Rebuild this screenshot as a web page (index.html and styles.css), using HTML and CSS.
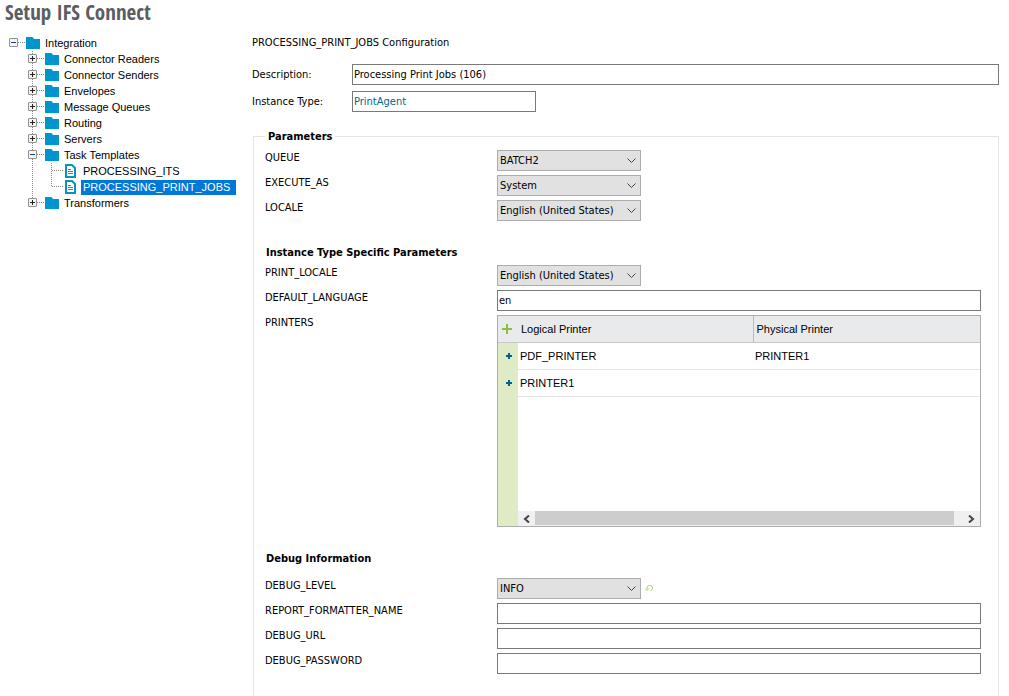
FILE: index.html
```html
<!DOCTYPE html>
<html lang="en">
<head>
<meta charset="utf-8">
<title>Setup IFS Connect</title>
<link rel="stylesheet" href="styles.css">
</head>
<body>
<svg class="symbols" aria-hidden="true">
  <symbol id="folder" viewBox="0 0 14 12"><path fill="#0095cc" d="M0 0H6.500L8 2H14V12H0Z"/></symbol>
  <symbol id="doc" viewBox="0 0 14 14"><path fill="#fff" stroke="#0a93bf" stroke-width="2" d="M2 1H8L11 4V13H2Z"/><path stroke="#0a93bf" d="M4 5.500H7M4 7.500H9M4 9.500H9"/></symbol>
  <symbol id="row-plus" viewBox="0 0 6 6"><path fill="#006288" d="M2 0H4V2H6V4H4V6H2V4H0V2H2Z"/></symbol>
</svg>
<header class="page-head"><h1>Setup IFS Connect</h1></header>
<div class="layout">
  <nav class="sidebar" aria-label="Integration objects">
    <ul class="tree">
      <li>
        <div class="node"><span class="slot"><button class="toggle open" aria-label="Collapse Integration"></button></span><svg class="icon"><use href="#folder"/></svg><a href="#">Integration</a></div>
        <ul>
          <li><div class="node"><span class="slot"><button class="toggle" aria-label="Expand Connector Readers"></button></span><svg class="icon"><use href="#folder"/></svg><a href="#">Connector Readers</a></div></li>
          <li><div class="node"><span class="slot"><button class="toggle" aria-label="Expand Connector Senders"></button></span><svg class="icon"><use href="#folder"/></svg><a href="#">Connector Senders</a></div></li>
          <li><div class="node"><span class="slot"><button class="toggle" aria-label="Expand Envelopes"></button></span><svg class="icon"><use href="#folder"/></svg><a href="#">Envelopes</a></div></li>
          <li><div class="node"><span class="slot"><button class="toggle" aria-label="Expand Message Queues"></button></span><svg class="icon"><use href="#folder"/></svg><a href="#">Message Queues</a></div></li>
          <li><div class="node"><span class="slot"><button class="toggle" aria-label="Expand Routing"></button></span><svg class="icon"><use href="#folder"/></svg><a href="#">Routing</a></div></li>
          <li><div class="node"><span class="slot"><button class="toggle" aria-label="Expand Servers"></button></span><svg class="icon"><use href="#folder"/></svg><a href="#">Servers</a></div></li>
          <li>
            <div class="node"><span class="slot"><button class="toggle open" aria-label="Collapse Task Templates"></button></span><svg class="icon"><use href="#folder"/></svg><a href="#">Task Templates</a></div>
            <ul>
              <li><div class="node"><span class="slot"></span><svg class="icon doc"><use href="#doc"/></svg><a href="#">PROCESSING_ITS</a></div></li>
              <li><div class="node"><span class="slot"></span><svg class="icon doc"><use href="#doc"/></svg><a class="selected" aria-current="page" href="#">PROCESSING_PRINT_JOBS</a></div></li>
            </ul>
          </li>
          <li><div class="node"><span class="slot"><button class="toggle" aria-label="Expand Transformers"></button></span><svg class="icon"><use href="#folder"/></svg><a href="#">Transformers</a></div></li>
        </ul>
      </li>
    </ul>
  </nav>
  <main class="content">
    <h2>PROCESSING_PRINT_JOBS Configuration</h2>
    <div class="summary">
      <label for="description">Description:</label>
      <input id="description" type="text" value="Processing Print Jobs (106)">
      <label for="instance-type">Instance Type:</label>
      <input id="instance-type" class="short" type="text" value="PrintAgent" readonly>
    </div>
    <fieldset class="params">
      <legend>Parameters</legend>
      <div class="fields">
        <label for="queue">QUEUE</label>
        <select id="queue"><option>BATCH2</option></select>
        <label for="execute-as">EXECUTE_AS</label>
        <select id="execute-as"><option>System</option></select>
        <label for="locale">LOCALE</label>
        <select id="locale"><option>English (United States)</option></select>
      </div>
      <h3>Instance Type Specific Parameters</h3>
      <div class="fields">
        <label for="print-locale">PRINT_LOCALE</label>
        <select id="print-locale"><option>English (United States)</option></select>
        <label for="default-language">DEFAULT_LANGUAGE</label>
        <input id="default-language" type="text" value="en">
        <span id="printers-label">PRINTERS</span>
        <div class="grid">
          <table aria-labelledby="printers-label">
            <thead>
              <tr>
                <th class="gutter"><button class="icon-button" aria-label="Add printer"><svg width="10" height="10" viewBox="0 0 10 10"><path fill="#8cbf3f" d="M4 0H6V4H10V6H6V10H4V6H0V4H4Z"/></svg></button></th>
                <th class="logical">Logical Printer</th>
                <th>Physical Printer</th>
              </tr>
            </thead>
            <tbody>
              <tr>
                <td class="gutter"><button class="icon-button row-button" aria-label="PDF_PRINTER actions"><svg width="6" height="6"><use href="#row-plus"/></svg></button></td>
                <td>PDF_PRINTER</td>
                <td>PRINTER1</td>
              </tr>
              <tr>
                <td class="gutter"><button class="icon-button row-button" aria-label="PRINTER1 actions"><svg width="6" height="6"><use href="#row-plus"/></svg></button></td>
                <td>PRINTER1</td>
                <td></td>
              </tr>
            </tbody>
          </table>
          <div class="scrollbar">
            <button class="icon-button" aria-label="Scroll left"><svg width="7" height="8" viewBox="0 0 7 8"><path fill="none" stroke="#444" stroke-width="2" d="M6 0.500L2 4L6 7.500"/></svg></button>
            <div class="track"><div class="thumb"></div></div>
            <button class="icon-button" aria-label="Scroll right"><svg width="7" height="8" viewBox="0 0 7 8"><path fill="none" stroke="#444" stroke-width="2" d="M1 0.500L5 4L1 7.500"/></svg></button>
          </div>
        </div>
      </div>
      <h3>Debug Information</h3>
      <div class="fields spaced">
        <label for="debug-level">DEBUG_LEVEL</label>
        <div class="with-undo">
          <select id="debug-level"><option>INFO</option></select>
          <button class="icon-button" aria-label="Reset DEBUG_LEVEL"><svg width="9" height="7" viewBox="0 0 9 7"><path fill="none" stroke="#a9cb70" d="M2 4.500V3Q2 0.500 4.500 0.500Q7.500 0.500 7.500 3Q7.500 5 5.500 5.500M0 3.500L2 5.500L4 3.500"/></svg></button>
        </div>
        <label for="formatter">REPORT_FORMATTER_NAME</label>
        <input id="formatter" type="text">
        <label for="debug-url">DEBUG_URL</label>
        <input id="debug-url" type="text">
        <label for="debug-password">DEBUG_PASSWORD</label>
        <input id="debug-password" type="password">
      </div>
    </fieldset>
  </main>
</div>
</body>
</html>
```
FILE: styles.css
```css
* { box-sizing: border-box; }

body {
  margin: 0;
  min-height: 100vh;
  display: flex;
  flex-direction: column;
  background: #fff;
  color: #000;
  font: 11px/14px "DejaVu Sans Condensed", Tahoma, "DejaVu Sans", sans-serif;
}

.symbols { display: none; }
h1, h2, h3, ul { margin: 0; padding: 0; font-size: inherit; }
ul { list-style: none; }
a { color: inherit; text-decoration: none; }
button { padding: 0; border: 0; background: none; }

.page-head { padding: 0 5px 11px; }
.page-head h1 {
  color: #5b5d60;
  font: bold 21px/24px "Liberation Sans Narrow", "Open Sans Condensed", "Liberation Sans", sans-serif;
}

.layout { flex: 1; display: flex; }

/* Tree */
.sidebar {
  flex: 0 0 252px;
  padding-left: 4px;
  font: 11px/16px "Liberation Sans", Arial, sans-serif;
}
.tree ul { margin-left: 19px; }
.tree ul > li {
  background: repeating-linear-gradient(#888 0 1px, transparent 1px 2px) 9px 0 / 1px 100% no-repeat;
}
.tree ul > li:last-child { background-size: 1px 8px; }
.node { display: flex; align-items: center; height: 16px; white-space: nowrap; }
.slot {
  flex: 0 0 22px;
  height: 16px;
  padding: 3px 0 0 5px;
  background: repeating-linear-gradient(90deg, #888 0 1px, transparent 1px 2px) 10px 7px / 11px 1px no-repeat;
}
.toggle {
  display: block;
  width: 9px;
  height: 9px;
  border: 1px solid #919191;
  border-radius: 1px;
  background:
    linear-gradient(#222, #222) center / 5px 1px no-repeat,
    linear-gradient(#222, #222) center / 1px 5px no-repeat,
    #f4f4f4;
}
.toggle.open { background: linear-gradient(#223c7a, #223c7a) center / 5px 1px no-repeat, #f4f4f4; }
.icon { flex: none; width: 14px; height: 12px; margin-right: 3px; }
.icon.doc { height: 14px; }
.node a { height: 15px; line-height: 15px; padding: 0 6px 0 2px; }
.node .selected { background: #0078d7; color: #fff; }

/* Form */
.content { flex: 1; min-width: 0; display: flex; flex-direction: column; padding: 1px 10px 0 0; }
.content h2 { font-weight: normal; }
.summary {
  display: grid;
  grid-template-columns: 100px 1fr;
  row-gap: 6px;
  align-items: center;
  padding: 14px 0 16px;
}
input, select {
  width: 100%;
  height: 21px;
  margin: 0;
  padding: 0 2px;
  border: 1px solid #7a7a7a;
  border-radius: 0;
  background: #fff;
  color: #000;
  font: inherit;
}
input { padding: 0 1px; }
.short { width: 184px; color: #00678f; }
select {
  appearance: none;
  width: 144px;
  border-color: #adadad;
  background: #e1e1e1 url("data:image/svg+xml,%3Csvg xmlns='http://www.w3.org/2000/svg' width='9' height='6'%3E%3Cpath d='M.5 .5L4.500 4.500L8.500 .5' fill='none' stroke='%23444'/%3E%3C/svg%3E") right 4px center no-repeat;
}

.params {
  flex: 1;
  min-width: 0;
  margin: 0 0 0 1px;
  padding: 6px 17px 20px 11px;
  border: 1px solid #e5e5e5;
  border-bottom: 0;
}
.params legend { padding: 2px 3px 0; font-weight: bold; }
.params h3 { margin: 25px 0 5px 1px; font-weight: bold; }
.fields {
  display: grid;
  grid-template-columns: 232px minmax(0, 1fr);
  row-gap: 4px;
  align-items: start;
}
.fields label, #printers-label { padding-top: 1px; }
.fields.spaced { padding-top: 7px; }
.with-undo { display: flex; align-items: center; gap: 4px; }

/* Printer grid */
.icon-button { display: flex; align-items: center; justify-content: center; }
.grid {
  display: flex;
  flex-direction: column;
  min-height: 212px;
  border: 1px solid #adadad;
  background: linear-gradient(#dfebc5, #dfebc5) 0 0 / 20px 100% no-repeat;
  font: 11px/14px "Liberation Sans", Arial, sans-serif;
}
table { width: 100%; border-collapse: collapse; table-layout: fixed; }
th, td { height: 27px; padding: 0 2px; text-align: left; font-weight: normal; border-bottom: 1px solid #e5e5e5; }
th { height: 26px; padding: 0 3px; background: #e9eaeb; border-color: #c8c8c8; }
th + th + th { border-left: 1px solid #bcbcbc; }
.gutter { width: 20px; padding: 0; }
td.gutter { border-bottom-color: #dfebc5; }
.gutter .icon-button { width: 18px; }
.logical { width: 235px; }
.gutter .row-button { padding-left: 4px; }
.scrollbar { display: flex; height: 15px; margin: auto 0 0 20px; background: #f0f0f0; }
.scrollbar .icon-button { width: 17px; }
.track { flex: 1; }
.thumb { width: 98%; height: 14px; background: #cdcdcd; }
```
